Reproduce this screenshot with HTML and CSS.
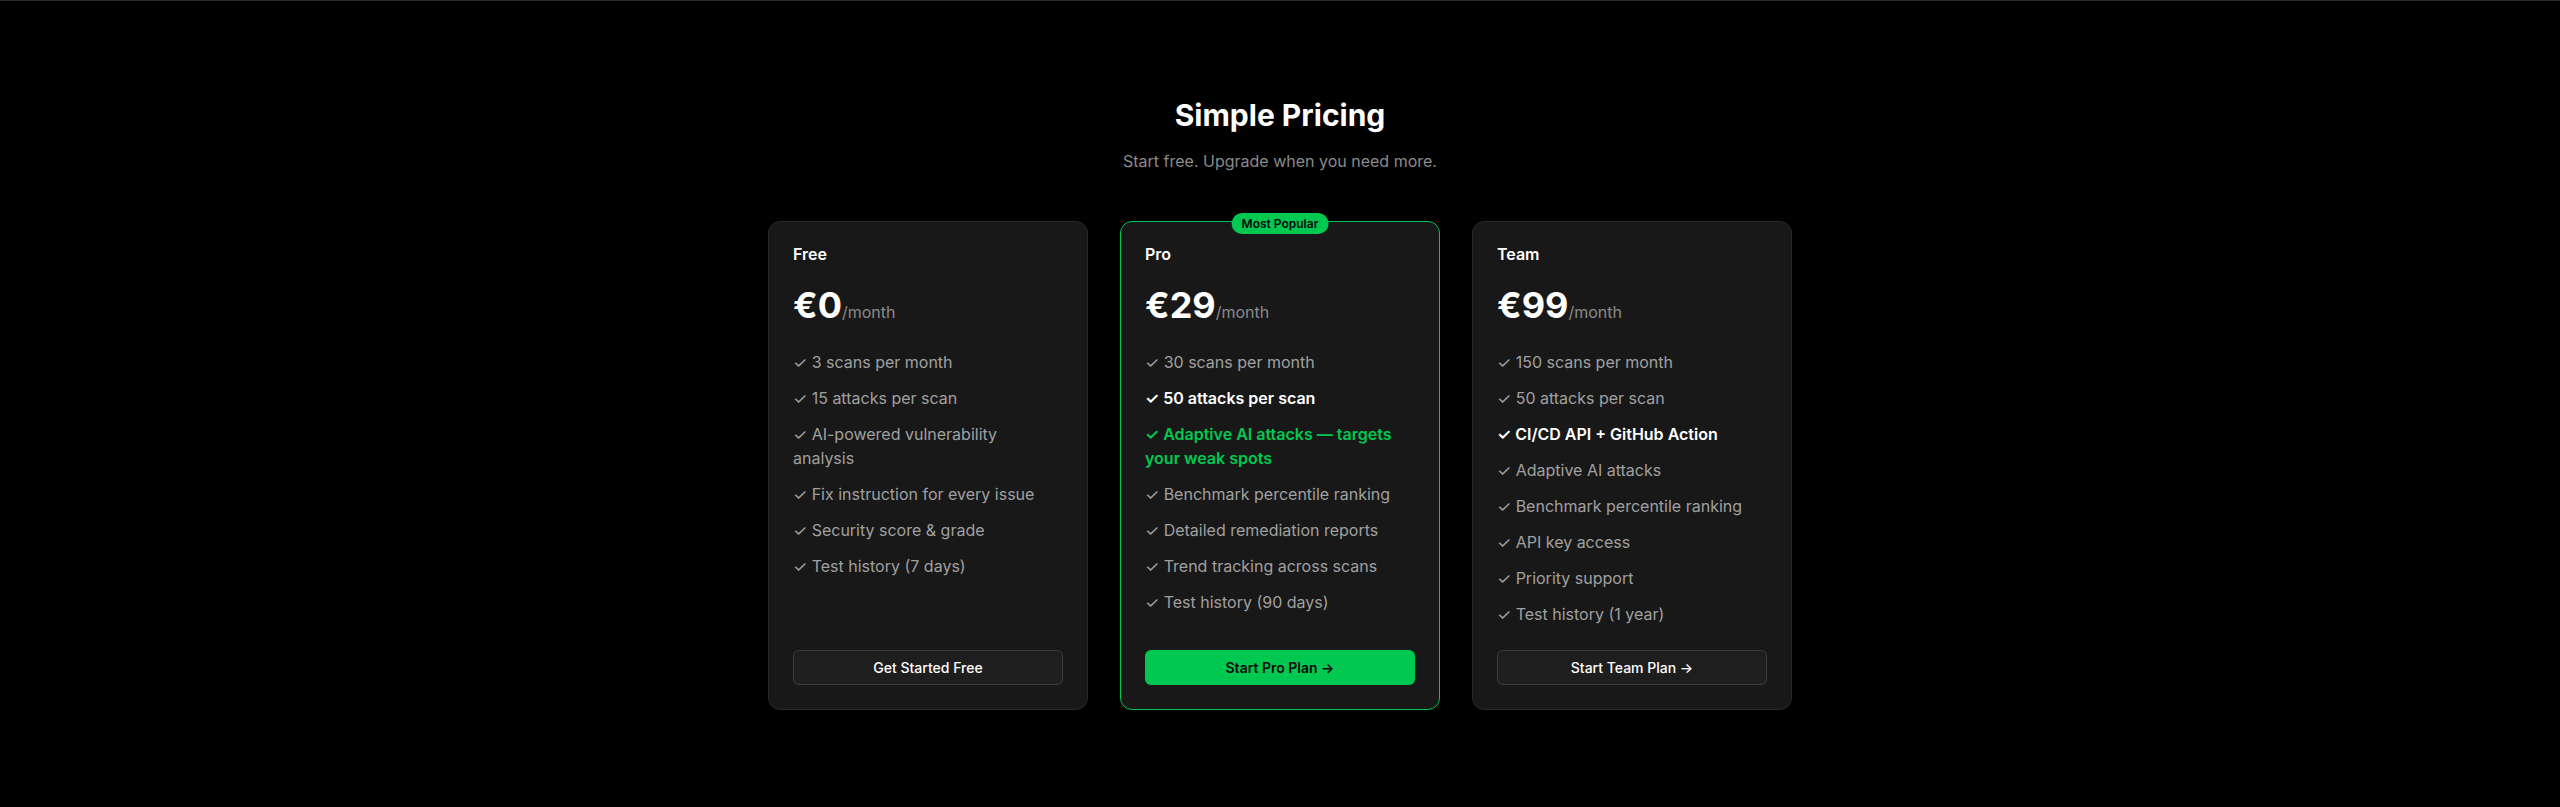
FILE: index.html
```html
<!DOCTYPE html>
<html lang="en">
<head>
<meta charset="utf-8">
<title>Simple Pricing</title>
<link rel="stylesheet" href="styles.css">
</head>
<body>
<section class="pricing">
  <h2 class="pricing-title">Simple Pricing</h2>
  <p class="pricing-sub">Start free. Upgrade when you need more.</p>
  <div class="plans">
    <div class="card">
      <h3 class="plan-name">Free</h3>
      <div class="price"><span class="amount">€0</span><span class="per">/month</span></div>
      <ul class="features">
        <li>✓ 3 scans per month</li>
        <li>✓ 15 attacks per scan</li>
        <li>✓ AI-powered vulnerability analysis</li>
        <li>✓ Fix instruction for every issue</li>
        <li>✓ Security score &amp; grade</li>
        <li>✓ Test history (7 days)</li>
      </ul>
      <a class="btn btn-outline" href="#">Get Started Free</a>
    </div>
    <div class="card card-popular">
      <span class="badge">Most Popular</span>
      <h3 class="plan-name">Pro</h3>
      <div class="price"><span class="amount">€29</span><span class="per">/month</span></div>
      <ul class="features">
        <li>✓ 30 scans per month</li>
        <li class="strong">✓ 50 attacks per scan</li>
        <li class="accent">✓ Adaptive AI attacks — targets your weak spots</li>
        <li>✓ Benchmark percentile ranking</li>
        <li>✓ Detailed remediation reports</li>
        <li>✓ Trend tracking across scans</li>
        <li>✓ Test history (90 days)</li>
      </ul>
      <a class="btn btn-primary" href="#">Start Pro Plan →</a>
    </div>
    <div class="card">
      <h3 class="plan-name">Team</h3>
      <div class="price"><span class="amount">€99</span><span class="per">/month</span></div>
      <ul class="features">
        <li>✓ 150 scans per month</li>
        <li>✓ 50 attacks per scan</li>
        <li class="strong">✓ CI/CD API + GitHub Action</li>
        <li>✓ Adaptive AI attacks</li>
        <li>✓ Benchmark percentile ranking</li>
        <li>✓ API key access</li>
        <li>✓ Priority support</li>
        <li>✓ Test history (1 year)</li>
      </ul>
      <a class="btn btn-outline" href="#">Start Team Plan →</a>
    </div>
  </div>
</section>
</body>
</html>
```
FILE: styles.css
```css
* { box-sizing: border-box; }

html, body {
  margin: 0;
  padding: 0;
  background: #000;
}

body {
  font-family: Inter, "Noto Sans", "Liberation Sans", sans-serif;
  color: #fff;
  border-top: 1px solid #2a2a2a;
  min-height: 807px;
}

.pricing {
  padding: 96px 24px 0;
  display: flex;
  flex-direction: column;
  align-items: center;
}

.pricing-title {
  margin: 0;
  font-size: 30px;
  line-height: 36px;
  font-weight: 700;
  color: #fff;
}

.pricing-sub {
  margin: 16px 0 0;
  font-size: 16px;
  line-height: 24px;
  color: #8a8a8a;
}

.plans {
  margin-top: 48px;
  width: 1024px;
  display: grid;
  grid-template-columns: repeat(3, 1fr);
  gap: 32px;
}

.card {
  position: relative;
  display: flex;
  flex-direction: column;
  background: #181818;
  border: 1px solid #282828;
  border-radius: 12px;
  padding: 24px;
}

.card-popular {
  border-color: #00c850;
}

.badge {
  position: absolute;
  top: -9px;
  left: 50%;
  transform: translateX(-50%);
  background: #00c850;
  color: #0a0a0a;
  font-size: 12px;
  font-weight: 600;
  line-height: 17px;
  padding: 2px 10px;
  border-radius: 999px;
  white-space: nowrap;
}

.plan-name {
  margin: 0;
  font-size: 16px;
  line-height: 16px;
  font-weight: 600;
  color: #fff;
}

.price {
  margin-top: 23px;
  font-size: 36px;
  line-height: 40px;
  white-space: nowrap;
}

.amount {
  font-weight: 700;
  color: #fff;
}

.per {
  font-size: 16px;
  line-height: 1;
  color: #8a8a8a;
}

.features {
  list-style: none;
  margin: 25px 0 24px;
  padding: 0 6px 0 0;
  display: flex;
  flex-direction: column;
  gap: 12px;
  font-size: 16px;
  line-height: 24px;
  color: #a0a0a0;
}

.features .strong {
  color: #fff;
  font-weight: 600;
}

.features .accent {
  color: #00c850;
  font-weight: 600;
}

.btn {
  margin-top: auto;
  display: flex;
  align-items: center;
  justify-content: center;
  height: 35px;
  border-radius: 6px;
  font-size: 14px;
  font-weight: 500;
  text-decoration: none;
}

.btn-outline {
  background: #1e1e1e;
  border: 1px solid #3c3c3c;
  color: #fff;
}

.btn-primary {
  background: #00c850;
  color: #0a0a0a;
  font-weight: 600;
}
```
